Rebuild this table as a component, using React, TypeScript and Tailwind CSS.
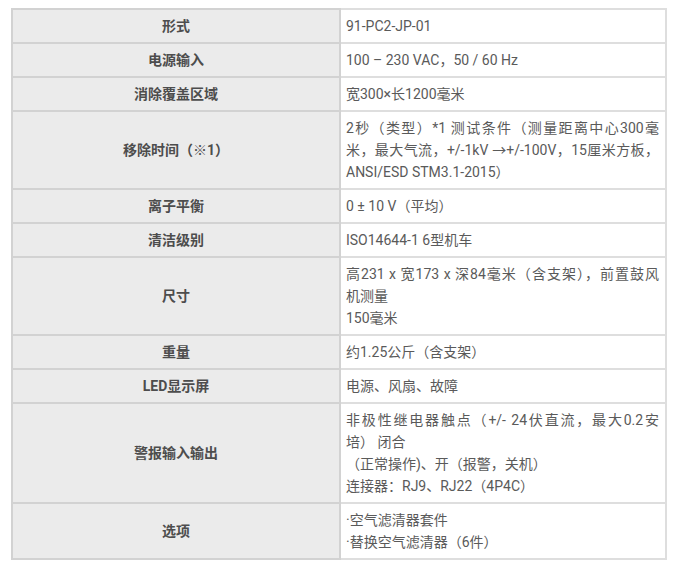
import React from "react";

const J = "[text-align:justify] [text-align-last:justify]";

type Row = { label: string; lines: { t: string; j?: boolean }[] };

const rows: Row[] = [
  { label: "形式", lines: [{ t: "91-PC2-JP-01" }] },
  { label: "电源输入", lines: [{ t: "100 – 230 VAC，50 / 60 Hz" }] },
  { label: "消除覆盖区域", lines: [{ t: "宽300×长1200毫米" }] },
  {
    label: "移除时间（※1）",
    lines: [
      { t: "2秒（类型）*1 测试条件（测量距离中心300毫", j: true },
      { t: "米，最大气流，+/-1kV →+/-100V，15厘米方板，", j: true },
      { t: "ANSI/ESD STM3.1-2015）" },
    ],
  },
  { label: "离子平衡", lines: [{ t: "0 ± 10 V（平均）" }] },
  { label: "清洁级别", lines: [{ t: "ISO14644-1 6型机车" }] },
  {
    label: "尺寸",
    lines: [
      { t: "高231 x 宽173 x 深84毫米（含支架），前置鼓风", j: true },
      { t: "机测量" },
      { t: "150毫米" },
    ],
  },
  { label: "重量", lines: [{ t: "约1.25公斤（含支架）" }] },
  { label: "LED显示屏", lines: [{ t: "电源、风扇、故障" }] },
  {
    label: "警报输入输出",
    lines: [
      { t: "非极性继电器触点（+/- 24伏直流，最大0.2安", j: true },
      { t: "培） 闭合" },
      { t: "（正常操作)、开（报警，关机）" },
      { t: "连接器：RJ9、RJ22（4P4C）" },
    ],
  },
  {
    label: "选项",
    lines: [{ t: "·空气滤清器套件" }, { t: "·替换空气滤清器（6件）" }],
  },
];

export default function App() {
  return (
    <div className="w-[686px] h-[575px] bg-white pt-2 pl-[11px]">
      <table
        className="w-[656px] border-collapse text-[14px] leading-[22px] text-[#5a5a5a]"
        style={{ fontFamily: 'Roboto, "Noto Sans CJK SC", sans-serif' }}
      >
        <tbody>
          {rows.map((r) => (
            <tr key={r.label}>
              <td className="w-[328px] border-2 border-[#d2d2d2] bg-[#ebebeb] px-[5px] py-[5px] text-center align-middle font-bold text-[#4d4d4d]">
                {r.label}
              </td>
              <td className="border-2 border-[#dedede] bg-white pl-[5px] pr-[6px] py-[5px] align-middle">
                {r.lines.map((l, i) => (
                  <div key={i} className={l.j ? J : "whitespace-nowrap"}>
                    {l.t}
                  </div>
                ))}
              </td>
            </tr>
          ))}
        </tbody>
      </table>
    </div>
  );
}
